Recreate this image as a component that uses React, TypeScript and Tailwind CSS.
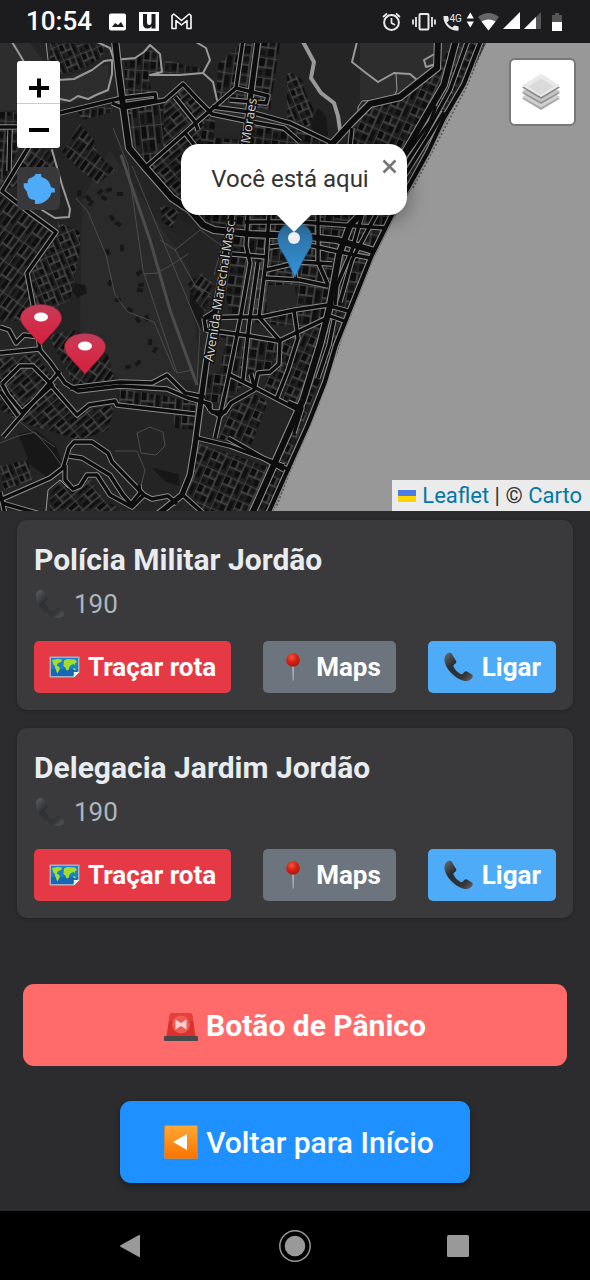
import React from "react";

type Pt = [number, number];

const path = (pts: Pt[]) => "M" + pts.map((p) => p.join(" ")).join("L");

const arteries: { w: number; pts: Pt[] }[] = [
  { w: 6, pts: [[115, 40], [119, 75], [123, 105], [129, 148], [144, 166], [172, 198], [190, 210], [203, 225], [214, 230], [250, 234], [300, 236], [337, 240], [374, 251]] },
  { w: 5, pts: [[258, 40], [250, 100], [243, 160], [232, 215], [222, 275], [208, 350], [201, 400], [195, 445], [190, 475], [182, 495], [158, 514]] },
  { w: 6, pts: [[456, 40], [444, 85], [412, 140], [380, 195], [350, 225], [339, 255], [329, 310], [320, 345], [303, 400], [285, 440], [252, 514]] },
  { w: 6, pts: [[438, 40], [437, 68], [400, 97], [370, 104], [352, 122], [330, 146]] },
  { w: 4, pts: [[482, 38], [464, 84], [444, 118], [428, 152], [408, 188], [392, 215], [372, 255], [352, 305], [336, 345], [325, 382], [308, 425], [290, 465], [268, 514]] },
];

const streets: Pt[][] = [
  [[0, 127], [20, 127], [60, 113], [105, 102], [122, 98], [155, 94], [156, 100], [122, 105]],
  [[112, 103], [124, 108], [165, 100], [183, 84], [197, 99], [212, 114], [246, 121], [284, 128], [300, 142]],
  [[243, 40], [236, 88], [197, 122], [146, 167]],
  [[175, 97], [195, 122], [198, 130]],
  [[236, 88], [268, 96], [266, 103], [230, 100]],
  [[212, 107], [250, 112], [290, 123], [334, 144]],
  [[185, 133], [200, 152]],
  [[10, 130], [9, 171]],
  [[30, 145], [2, 191], [30, 213], [56, 232], [27, 273], [36, 320], [40, 350]],
  [[0, 353], [39, 349], [50, 362], [65, 383], [78, 391], [120, 386], [167, 389], [188, 398], [210, 404], [210, 411]],
  [[70, 388], [120, 382], [152, 383], [167, 375], [185, 393], [205, 397]],
  [[0, 327], [9, 330], [16, 343], [24, 335], [40, 337]],
  [[60, 371], [3, 437]],
  [[2, 384], [20, 366], [33, 366], [52, 385], [22, 412], [8, 395], [2, 384]],
  [[0, 391], [18, 416]],
  [[49, 383], [77, 415], [89, 405], [115, 401], [117, 405], [160, 410], [195, 414]],
  [[0, 500], [50, 478], [63, 468], [69, 448], [74, 442], [92, 442], [108, 453], [112, 462], [144, 495], [152, 499], [168, 496], [177, 504]],
  [[0, 492], [5, 514]],
  [[2, 503], [40, 514]],
  [[69, 456], [82, 458], [110, 475], [123, 495], [131, 504], [140, 493], [139, 485]],
  [[65, 465], [65, 480], [73, 489], [80, 486], [87, 475], [97, 475], [110, 495], [132, 507], [145, 494]],
  [[205, 402], [212, 412], [225, 412], [231, 403], [254, 390], [258, 373], [270, 372], [279, 364], [280, 341], [259, 317], [266, 262], [269, 215]],
  [[212, 411], [220, 416], [227, 409]],
  [[248, 215], [246, 245], [250, 263], [240, 320], [229, 375], [215, 438]],
  [[258, 262], [249, 325], [243, 380]],
  [[204, 318], [235, 317], [262, 317], [295, 310], [328, 305]],
  [[206, 330], [250, 336], [279, 341], [325, 319]],
  [[294, 310], [298, 338], [288, 370], [277, 398]],
  [[228, 374], [252, 386], [298, 410]],
  [[251, 374], [255, 390]],
  [[204, 318], [206, 331]],
  [[204, 318], [214, 312]],
  [[228, 438], [284, 470]],
  [[197, 438], [230, 446], [284, 466]],
  [[184, 496], [204, 514]],
  [[232, 254], [268, 257]],
  [[266, 270], [300, 262], [332, 264]],
  [[265, 278], [300, 280], [328, 286]],
  [[270, 247], [300, 243], [335, 251], [370, 258]],
  [[245, 222], [300, 222], [385, 228]],
  [[318, 215], [318, 262], [328, 285]],
  [[294, 262], [296, 280]],
  [[362, 215], [352, 250], [337, 285], [335, 305]],
  [[376, 215], [352, 260], [340, 302]],
  [[468, 40], [450, 90], [425, 135], [402, 170], [376, 215]],
  [[436, 106], [430, 122], [402, 160]],
  [[444, 112], [430, 135], [402, 180]],
  [[350, 146], [352, 128]],
  [[330, 306], [348, 311]],
  [[330, 316], [344, 321]],
  [[334, 320], [329, 345], [318, 378]],
  [[288, 402], [302, 408], [294, 433]],
  [[278, 465], [290, 470]],
];

const rivers: { w: number; pts: Pt[] }[] = [
  { w: 2, pts: [[12, 42], [20, 55], [24, 62]] },
  { w: 1, pts: [[46, 42], [48, 60]] },
  { w: 2, pts: [[58, 80], [74, 79], [92, 70], [104, 61], [112, 60], [112, 74], [108, 90], [96, 95], [88, 99], [78, 96], [70, 101], [60, 99]] },
  { w: 2, pts: [[97, 42], [110, 48], [114, 60], [135, 58], [144, 52], [150, 45], [160, 54], [162, 72], [150, 75], [180, 75], [203, 73], [210, 60], [206, 48], [196, 42]] },
  { w: 2, pts: [[203, 73], [213, 82], [217, 100]] },
  { w: 4, pts: [[302, 40], [314, 62], [311, 78], [321, 93], [334, 103], [338, 116], [340, 130]] },
  { w: 2, pts: [[357, 42], [352, 62], [366, 73], [378, 82], [394, 73], [410, 74], [417, 80]] },
  { w: 1, pts: [[396, 74], [397, 90], [393, 99], [362, 101], [358, 107], [358, 112], [352, 120]] },
  { w: 2, pts: [[438, 52], [424, 60], [426, 67], [436, 64]] },
  { w: 2, pts: [[52, 150], [62, 185], [70, 209], [69, 217], [55, 218], [42, 210]] },
  { w: 1, pts: [[46, 511], [48, 490], [60, 480], [68, 488]] },
];

const taxiways: { w: number; pts: Pt[] }[] = [
  { w: 3, pts: [[121, 155], [150, 240], [170, 310], [197, 385]] },
  { w: 1, pts: [[113, 128], [128, 165], [143, 270], [177, 373], [193, 370]] },
  { w: 1, pts: [[132, 166], [200, 330], [197, 383]] },
  { w: 1, pts: [[76, 198], [88, 212], [106, 255], [115, 295], [128, 312], [154, 322], [175, 372]] },
  { w: 1, pts: [[143, 274], [157, 273], [173, 264], [188, 254]] },
  { w: 1, pts: [[137, 433], [150, 427], [163, 432], [165, 446], [156, 455], [141, 453], [137, 433]] },
  { w: 1, pts: [[115, 451], [137, 451], [145, 470], [141, 486]] },
  { w: 1, pts: [[0, 443], [18, 436], [35, 432], [52, 452], [62, 466]] },
  { w: 1, pts: [[12, 416], [30, 430], [55, 447]] },
  { w: 1, pts: [[160, 240], [175, 250], [195, 285], [212, 295]] },
  { w: 1, pts: [[175, 250], [200, 230], [222, 246], [214, 275]] },
];

const districts: { fill: string; pts: Pt[] }[] = [
  { fill: "url(#g-20)", pts: [[50, 43], [104, 45], [103, 56], [85, 68], [62, 74], [50, 60]] },
  { fill: "url(#g5)", pts: [[125, 62], [150, 48], [160, 58], [160, 72], [148, 76], [152, 92], [125, 96]] },
  { fill: "url(#g5)", pts: [[165, 60], [203, 69], [203, 74], [163, 73]] },
  { fill: "url(#g-6)", pts: [[128, 110], [163, 104], [164, 145], [147, 163], [135, 148]] },
  { fill: "url(#g50)", pts: [[164, 103], [184, 86], [211, 115], [200, 150], [178, 200], [148, 168], [164, 145]] },
  { fill: "url(#g35)", pts: [[62, 152], [80, 124], [94, 140], [97, 153], [115, 170], [98, 184], [78, 168]] },
  { fill: "url(#g5)", pts: [[78, 112], [110, 105], [112, 112], [82, 120]] },
  { fill: "url(#g5)", pts: [[0, 112], [18, 112], [18, 150], [5, 182], [0, 185]] },
  { fill: "url(#g35)", pts: [[30, 148], [50, 150], [60, 168], [20, 185], [8, 188]] },
  { fill: "url(#g35)", pts: [[0, 195], [54, 232], [25, 275], [34, 320], [0, 322]] },
  { fill: "url(#g-20)", pts: [[58, 222], [80, 232], [80, 250], [70, 300], [38, 315], [30, 275], [58, 232]] },
  { fill: "url(#g8)", pts: [[218, 64], [240, 43], [280, 43], [270, 110], [245, 106], [216, 100]] },
  { fill: "url(#g8)", pts: [[206, 117], [300, 130], [335, 145], [240, 175], [225, 232], [185, 205]] },
  { fill: "url(#g-20)", pts: [[287, 70], [303, 80], [305, 92], [314, 110], [310, 128], [287, 118]] },
  { fill: "url(#g25)", pts: [[366, 105], [400, 100], [436, 70], [430, 108], [402, 150], [350, 146]] },
  { fill: "url(#g25)", pts: [[452, 43], [480, 43], [440, 118], [380, 230], [345, 235]] },
  { fill: "url(#g8)", pts: [[230, 215], [390, 215], [350, 305], [325, 330], [230, 320], [222, 265]] },
  { fill: "url(#g35)", pts: [[188, 284], [202, 272], [214, 285], [206, 312], [196, 302]] },
  { fill: "url(#g50)", pts: [[160, 205], [180, 210], [172, 228], [162, 222]] },
  { fill: "url(#g8)", pts: [[213, 330], [278, 342], [275, 368], [252, 372], [228, 405], [206, 400]] },
  { fill: "url(#g25)", pts: [[280, 342], [326, 322], [312, 370], [298, 408], [262, 390]] },
  { fill: "url(#g25)", pts: [[228, 412], [254, 394], [268, 402], [250, 448], [218, 438]] },
  { fill: "url(#g25)", pts: [[197, 442], [282, 472], [262, 511], [204, 511], [188, 492]] },
  { fill: "url(#g25)", pts: [[325, 330], [340, 330], [268, 511], [254, 511], [304, 400]] },
  { fill: "url(#g35)", pts: [[48, 335], [75, 330], [108, 355], [115, 380], [75, 386]] },
  { fill: "url(#g50)", pts: [[0, 358], [36, 354], [75, 412], [115, 405], [108, 430], [80, 440], [30, 425], [0, 410]] },
  { fill: "url(#g5)", pts: [[118, 388], [197, 402], [196, 430], [175, 428], [172, 412], [118, 403]] },
  { fill: "url(#g-20)", pts: [[0, 466], [28, 460], [32, 480], [4, 490]] },
  { fill: "url(#g50)", pts: [[50, 495], [62, 478], [72, 490], [90, 478], [104, 500], [125, 511], [50, 511]] },
];

const clearings: Pt[][] = [
  [[268, 285], [295, 285], [297, 306], [266, 312]],
  [[214, 336], [226, 338], [220, 372], [209, 374]],
  [[237, 110], [247, 112], [243, 140], [214, 138], [215, 118]],
];

const trees: Pt[] = [[79, 193], [91, 203], [100, 192], [109, 190], [120, 194], [104, 198], [88, 198], [108, 252], [122, 248], [110, 283], [139, 273], [141, 285], [118, 300], [130, 310], [138, 320], [147, 318], [150, 342], [155, 350], [138, 363], [128, 367], [140, 290], [118, 224], [112, 218]];

function Grid({ id, w, h, angle }: { id: string; w: number; h: number; angle: number }) {
  return (
    <pattern id={id} width={w * 3} height={h * 2} patternUnits="userSpaceOnUse" patternTransform={`rotate(${angle})`}>
      <rect width={w * 3} height={h * 2} fill="#202020" />
      <rect x="1" y="1" width={w - 2} height={h - 2} fill="#0d0d0d" />
      <rect x={w + 1} y={h + 1} width={w - 2} height={h - 3} fill="#0f0f0f" />
      <rect x={w + 2} y="2" width={w - 2} height={h - 5} fill="#151515" />
      <rect x={w * 2 + 1} y="3" width={w - 3} height={h + 2} fill="#101010" />
      <rect x="1" y={h + 3} width={w - 3} height={h - 5} fill="#141414" />
      <path d={`M0 0H${w * 3}M0 ${h}H${w * 2}M0 0V${h * 2}M${w} 0V${h}M${w * 2} 0V${h * 2}`} stroke="#575757" strokeWidth="1" fill="none" />
    </pattern>
  );
}

function StreetMap() {
  return (
    <svg className="block h-full w-full" viewBox="0 43 590 468" preserveAspectRatio="xMidYMid slice" aria-hidden="true">
      <defs>
        <Grid id="g-20" w={6} h={8} angle={-22} />
        <Grid id="g-6" w={7} h={14} angle={-6} />
        <Grid id="g5" w={7} h={10} angle={4} />
        <Grid id="g8" w={8} h={10} angle={8} />
        <Grid id="g25" w={7} h={9} angle={24} />
        <Grid id="g35" w={6} h={13} angle={36} />
        <Grid id="g50" w={6} h={11} angle={50} />
      </defs>
      <rect y="43" width="590" height="468" fill="#242424" />
      <path d="M0 43H30L58 80L108 64L110 92L62 104L0 112Z M360 43H436V66L398 96L360 100Z" fill="#2d2d2d" />
      <path d="M110 150L190 270L200 380L120 380L80 330L82 200Z" fill="#2a2a2a" />
      <g fill="#171717">
        <path d="M318 108l8 8 2 20-12 4-6-16zM190 285l14 20-2 25-12-25zM36 430l20 16 8 22-14 12-20-16-12-30zM75 283l10 2 2 8-10 5-5-8zM152 468l26 6 2 12-14-4z" />
        {trees.map(([x, y], i) => (
          <rect key={i} x={x - 2} y={y - 3} width="4" height="6" transform={`rotate(${i * 23} ${x} ${y})`} />
        ))}
      </g>
      {districts.map((d, i) => (
        <path key={i} d={path(d.pts) + "Z"} fill={d.fill} />
      ))}
      {clearings.map((c, i) => (
        <path key={i} d={path(c) + "Z"} fill="#272727" />
      ))}
      <g fill="none" stroke="#4c4c4c" strokeLinejoin="round">
        {taxiways.map((t, i) => (
          <path key={i} d={path(t.pts)} strokeWidth={t.w} />
        ))}
      </g>
      <g fill="none" stroke="#999999" strokeLinejoin="round" strokeLinecap="round">
        {rivers.map((r, i) => (
          <path key={i} d={path(r.pts)} strokeWidth={r.w} />
        ))}
      </g>
      <path d="M486 43L464 88L447 119L430 154L410 191L394 218L374 258L354 308L338 348L327 384L310 427L292 467L273 511H590V43Z" fill="#989898" />
      <path d="M485 43L466 88L449 120L412 190M341 340L336 356M319 404L304 440L289 474L276 508" fill="none" stroke="#555" strokeWidth="1.6" strokeDasharray="2 2" />
      <g fill="none" stroke="#8c8c8c" strokeLinejoin="round">
        {streets.map((s, i) => (
          <path key={i} d={path(s)} strokeWidth="5.4" />
        ))}
        {arteries.map((s, i) => (
          <path key={i} d={path(s.pts)} strokeWidth={s.w + 2.2} />
        ))}
      </g>
      <g fill="none" stroke="#0d0d0d" strokeLinejoin="round">
        {streets.map((s, i) => (
          <path key={i} d={path(s)} strokeWidth="3.4" />
        ))}
        {arteries.map((s, i) => (
          <path key={i} d={path(s.pts)} strokeWidth={s.w} />
        ))}
      </g>
      <g fill="#d2d2d2" stroke="#141414" strokeWidth="3" paintOrder="stroke" fontFamily="'Open Sans', 'Noto Sans', sans-serif" fontSize="13">
        <text transform="translate(213 362) rotate(-81)">Avenida Marechal Masc</text>
        <text transform="translate(248 155) rotate(-81)">o Moraes</text>
      </g>
    </svg>
  );
}

function StatusBar() {
  return (
    <header className="flex h-[43px] shrink-0 items-center justify-between bg-[#1c1c1f] pr-6 pl-[26px] text-white">
      <div className="flex items-center">
        <span className="text-[26px] leading-[43px] font-medium">10:54</span>
        <svg className="ml-4 h-[22px] w-[84px] shrink-0" viewBox="108 11 84 22" aria-hidden="true">
          <rect x="109" y="13.500" width="17" height="17" rx="2" fill="#fff" />
          <path d="M112 27l3-4 3 2 3-3 3 5z" fill="#1c1c1f" />
          <rect x="139" y="12" width="20" height="19" fill="#fff" />
          <path d="M143 14v9.500q0 5 4.500 5 3 0 4-2.500v2.500h4v-14.500h-4v8q0 3-2.300 3t-2.200-3v-8z" fill="#1c1c1f" />
          <path d="M172 28.500v-13l1.800-1.500 7.700 6.500 7.700-6.500 1.800 1.500v13h-4v-8l-5.500 4.500-5.500-4.500v8z" fill="none" stroke="#fff" strokeWidth="1.600" strokeLinejoin="round" />
        </svg>
      </div>
      <svg className="h-[22px] w-[184px] shrink-0" viewBox="382 11 184 22" aria-hidden="true">
        <g fill="none" stroke="#e8e8e8" strokeWidth="2">
          <circle cx="391.500" cy="22.500" r="7.400" />
          <path d="M391.500 18v5l3.500 2M383 17l4-3.500M400 17l-4-3.500" strokeWidth="1.700" />
          <rect x="419.500" y="14" width="9" height="15.500" rx="1" />
          <path d="M416 17v10M413 19.500v5M432 17v10M435 19.500v5" strokeWidth="1.800" />
        </g>
        <path d="M444.200 16h3.300q.7 0 .8.700l.5 3.300q.1.500-.3.900l-1.600 1.700q1.900 3.400 5.200 5l1.700-1.700q.4-.4.900-.3l3.200.6q.7.100.7.800v3q0 .8-.8.800c-8 0-14.300-6-14.400-14 0-.5.300-.8.800-.8z" fill="#e8e8e8" />
        <text x="449.500" y="21.500" fontSize="10" fill="#e8e8e8" fontFamily="Roboto, sans-serif">4G</text>
        <path d="M470.300 12.500l3.600 6h-7.200zM470.300 27.500l3.600-6h-7.200z" fill="#fff" />
        <path d="M478 17q10.500-8 21 0L488.500 30.500z" fill="#666" />
        <path d="M481.500 21.500q7-4 14 0l-7 9z" fill="#fff" />
        <path d="M520 12v17h-17z" fill="#fff" />
        <path d="M541 12v17h-17z" fill="#555" />
        <path d="M536 17v12h-12z" fill="#fff" />
        <path d="M555 13h4v2h3v16h-10v-16h3z" fill="#555" />
        <rect x="552" y="22" width="10" height="9" fill="#fff" />
      </svg>
    </header>
  );
}

function Pin({ className, id }: { className: string; id: string }) {
  return (
    <svg className={className} viewBox="0 0 42 42" aria-hidden="true">
      <defs>
        <linearGradient id={id} x1="0" y1="0" x2="0" y2="1">
          <stop offset="0" stopColor="#b8405a" />
          <stop offset=".3" stopColor="#d0324f" />
          <stop offset="1" stopColor="#d51f3c" />
        </linearGradient>
      </defs>
      <path d="M21 .5C9 .5.500 6.500.500 14c0 5 4.500 9.500 9 14.500L21 41 32.500 28.500c4.500-5 9-9.500 9-14.500C41.500 6.500 33 .5 21 .5z" fill={`url(#${id})`} stroke="#a81c38" strokeOpacity=".5" />
      <ellipse cx="21" cy="13" rx="7" ry="4.500" fill="#fff" />
    </svg>
  );
}

function MapPanel() {
  const zoomBtn = "flex items-center justify-center";
  return (
    <section className="relative h-[468px] w-full shrink-0 overflow-hidden" aria-label="Mapa">
      <StreetMap />

      <div className="absolute top-[18px] left-[17px] flex w-[43px] flex-col overflow-hidden rounded-[3px] bg-white">
        <button type="button" aria-label="Aumentar zoom" className={zoomBtn + " h-[43px] border-b border-[#cccccc]"}>
          <svg className="mt-3 h-5 w-5" viewBox="0 0 20 20"><path d="M10 .5v19M0 10h20" stroke="#000" strokeWidth="4" /></svg>
        </button>
        <button type="button" aria-label="Diminuir zoom" className={zoomBtn + " h-11"}>
          <svg className="mt-2 h-5 w-5" viewBox="0 0 20 20"><path d="M0 10h20" stroke="#000" strokeWidth="4" /></svg>
        </button>
      </div>

      <button type="button" aria-label="Minha localização" className="absolute top-[124px] left-[17px] flex h-[43px] w-[43px] items-center justify-center rounded-md bg-[#3a3a3c]/95">
        <svg className="h-8 w-8" viewBox="0 0 32 32">
          <path d="M12.500 1h5.500l.7 3.200c2.300.5 4.500 1.600 6 3.300 1.800 2 2.800 4.400 3.300 6.800l3.800 1.200v4h-3.500c-.4 2.300-1.300 4.300-2.600 5.800-1.600 1.900-3.600 3.500-6 4.400-2.400 1-4.800 1.300-7.700 1.300v-4c-2.200 0-4.200-.7-5.700-1.700-1.400-2-2.200-4.200-2.300-6.600L1.500 15.500.7 13.700v-3.400h4c-.4-1.800.3-3.600 1.600-5 1.500-.3 3-1 5-2.300z" fill="#4dabf7" />
        </svg>
      </button>

      <button type="button" aria-label="Camadas" className="absolute top-[15px] right-[14px] flex h-[68px] w-[67px] items-center justify-center rounded-[6px] border-2 border-[#777777] bg-white pr-1">
        <svg className="h-[38px] w-[40px]" viewBox="0 0 40 38">
          <path d="M1 25.500L20 15l19 10.500L20 37z" fill="#a6a6a6" />
          <path d="M1 23.800L20 13l19 10.800L20 34.500z" fill="#d0d0d0" />
          <path d="M1 20L20 9l19 11L20 31z" fill="#929292" />
          <path d="M1 18.500L20 8l19 10.500L20 29z" fill="#c4c4c4" />
          <path d="M1 14.500L20 4l19 10.500L20 26z" fill="#898989" />
          <path d="M1 12.800L20 .5l19 12.300L20 24z" fill="#e9e9e9" />
          <path d="M7 13.500L20 5.500l13 8L20 22z" fill="#dadada" />
        </svg>
      </button>

      <Pin id="pin-a" className="absolute top-[261px] left-[20px] h-[42px] w-[42px]" />
      <Pin id="pin-b" className="absolute top-[290px] left-[64px] h-[42px] w-[42px]" />
      <svg className="absolute top-[179px] left-[277px] h-[56px] w-[36px]" viewBox="0 0 36 56" aria-hidden="true">
        <defs>
          <linearGradient id="bluePin" x1="0" y1="0" x2="0" y2="1">
            <stop offset="0" stopColor="#2e6c97" />
            <stop offset="1" stopColor="#3393de" />
          </linearGradient>
        </defs>
        <path d="M18 1C8 1 1 8 1 17c0 8 5 13 9 21l8 17 8-17c4-8 9-13 9-21C35 8 28 1 18 1z" fill="url(#bluePin)" stroke="#2474ab" />
      </svg>

      <div className="absolute top-[101px] left-[181px] flex h-[71px] w-[226px] items-center justify-center rounded-[18px] bg-white shadow-[0_4px_20px_rgba(0,0,0,0.4)]">
        <p className="pr-2 pb-0.5 text-[24px] whitespace-nowrap text-[#333333]">Você está aqui</p>
        <button type="button" aria-label="Fechar" className="absolute top-[15px] right-[10px] h-[15px] w-[15px]">
          <svg viewBox="0 0 15 15"><path d="M1.500 1.500l12 12M13.500 1.500l-12 12" stroke="#757575" strokeWidth="2.600" /></svg>
        </button>
        <svg className="absolute top-[70px] left-[95px] h-[32px] w-[36px]" viewBox="0 0 36 32" aria-hidden="true">
          <path d="M0 0h36L18 18z" fill="#fff" />
          <circle cx="18" cy="24" r="6" fill="#eeeeee" />
        </svg>
      </div>

      <div className="absolute right-0 bottom-0 flex h-[31px] items-center bg-[#ebebeb] pr-2 pl-[6px] text-[22px] whitespace-pre text-[#333333]">
        <svg className="mr-[6px] h-3 w-[18px]" viewBox="0 0 18 12" aria-hidden="true"><path d="M0 0h18v6H0z" fill="#4c7be1" /><path d="M0 6h18v6H0z" fill="#ffd500" /></svg>
        <a href="#leaflet" className="text-[#0078a8]">Leaflet</a>
        <span> | © </span>
        <a href="#carto" className="text-[#0078a8]">Carto</a>
      </div>
    </section>
  );
}

function PhoneIcon({ className }: { className: string }) {
  return (
    <svg className={className} viewBox="0 0 30 30" aria-hidden="true">
      <defs>
        <linearGradient id="handset" x1="0" y1="0" x2="1" y2="1">
          <stop offset="0" stopColor="#6b6f72" />
          <stop offset=".35" stopColor="#2b2d2f" />
          <stop offset=".75" stopColor="#323436" />
          <stop offset="1" stopColor="#66696c" />
        </linearGradient>
      </defs>
      <path d="M5.500.8C3 1.500.8 4 .9 7.500c.2 4.500 3 9.600 7 13.700 4.500 4.600 10.600 8 15.600 7.800 2.800-.1 5-2.200 5.700-4.200.4-1.200-.2-2-1.200-2.600l-4.600-2.600c-1-.5-2-.3-2.700.5l-1.200 1.400c-.6.8-1.400 1-2.400.5-3-1.500-5.600-4.300-7-7.200-.4-1-.1-1.700.6-2.300l1.200-1c.9-.7 1.100-1.600.7-2.600L8.400 2C7.900.9 6.900.4 5.500.8z" fill="url(#handset)" />
    </svg>
  );
}

function MapIcon() {
  return (
    <svg className="h-[22px] w-[31px]" viewBox="0 0 30 22" preserveAspectRatio="none" aria-hidden="true">
      <path d="M.5.5h29v15.500L24 21.500H.5z" fill="#9fb4c2" />
      <path d="M2 2h26v12.500L23 20H2z" fill="#1b7fd0" />
      <path d="M2 13h26v2l-5 5H2z" fill="#1667b8" />
      <path d="M3 4l5-1 5 .5-1.500 2.500-3 1.500-1 2 2.500 1.500.5 2.500-2.500 4-1.500-4-1-3.500L4 8zM14.500 4.500l3-1.500 8 .5 1.500 2.500-2 1.500.5 2-2-1.500-2 1-1.500 1.500-1 3.500-2 .5-1-3-2-1.500zM23 12l2.500.5.5 2-2-.5z" fill="#a4dc2c" />
      <path d="M29.500 16H24v5.500z" fill="#eef4f7" />
    </svg>
  );
}

function PushpinIcon() {
  return (
    <svg className="h-[30px] w-[30px]" viewBox="0 0 30 30" aria-hidden="true">
      <defs>
        <radialGradient id="pinHead" cx=".4" cy=".3" r=".7">
          <stop offset="0" stopColor="#f5564a" />
          <stop offset=".5" stopColor="#dc2114" />
          <stop offset="1" stopColor="#ae170d" />
        </radialGradient>
      </defs>
      <path d="M14.300 14h1.600l-.3 14.500h-.9z" fill="#b4bcc3" />
      <circle cx="15" cy="8" r="6.800" fill="url(#pinHead)" />
    </svg>
  );
}

function SirenIcon() {
  return (
    <svg className="mt-1 h-[28px] w-[34px]" viewBox="0 0 34 28" aria-hidden="true">
      <path d="M9 0h16q3 0 3.500 3L31.500 23h-29L5.500 3Q6 0 9 0z" fill="#d9322d" />
      <path d="M9 0h16q3 0 3.500 3l.8 5h-24.600l.8-5Q6 0 9 0z" fill="#e5403a" />
      <circle cx="17" cy="11.500" r="9" fill="#ee5a54" />
      <path d="M11.500 6.500l5.500 3.500 5.500-3.500v10L17 13l-5.500 3.500z" fill="#f8cfd0" />
      <rect y="23" width="34" height="5" rx="1" fill="#484848" />
    </svg>
  );
}

function BackEmoji() {
  return (
    <svg className="h-[34px] w-[34px]" viewBox="0 0 34 34" aria-hidden="true">
      <defs>
        <linearGradient id="tile" x1="0" y1="0" x2="0" y2="1">
          <stop offset="0" stopColor="#ffa834" />
          <stop offset="1" stopColor="#fb7200" />
        </linearGradient>
      </defs>
      <rect x=".5" y=".5" width="33" height="33" rx="1.500" fill="url(#tile)" stroke="#c88a4a" />
      <path d="M23 9v16L9 17z" fill="#fff" />
    </svg>
  );
}

function StationCard({ name, phone }: { name: string; phone: string }) {
  const btn = "flex h-[52px] items-center gap-2 rounded-[5px] px-[15px] text-[26px] font-bold whitespace-nowrap text-white";
  return (
    <article className="rounded-[10px] bg-[#3a3a3c] p-[17px] shadow-[0_1px_3px_rgba(0,0,0,0.25)]">
      <h2 className="text-[30px] leading-[46px] font-bold text-[#e9ecef]">{name}</h2>
      <p className="flex items-center gap-2 text-[26px] leading-[42px] text-[#adb5bd]">
        <PhoneIcon className="h-[30px] w-[32px] opacity-75" />
        {phone}
      </p>
      <div className="mt-4 flex flex-wrap justify-between gap-y-2">
        <button type="button" className={btn + " bg-[#e63946]"}>
          <MapIcon />
          Traçar rota
        </button>
        <button type="button" className={btn + " bg-[#6c757d]"}>
          <PushpinIcon />
          Maps
        </button>
        <a href={"tel:" + phone} className={btn + " bg-[#4dabf7]"}>
          <PhoneIcon className="h-[30px] w-[31px]" />
          Ligar
        </a>
      </div>
    </article>
  );
}

export default function App() {
  return (
    <div className="flex min-h-screen w-full flex-col bg-[#2c2c2e] font-['Roboto',sans-serif]">
      <StatusBar />
      <main className="flex flex-1 flex-col">
        <MapPanel />
        <div className="flex flex-col gap-[18px] px-[17px] pt-[9px]">
          <StationCard name="Polícia Militar Jordão" phone="190" />
          <StationCard name="Delegacia Jardim Jordão" phone="190" />
        </div>
        <div className="flex flex-col items-center gap-[35px] px-[23px] pt-[66px] pb-7">
          <button type="button" className="flex h-[82px] w-full items-center justify-center gap-2 rounded-[11px] bg-[#ff6b6b] text-[30px] font-bold text-white">
            <SirenIcon />
            Botão de Pânico
          </button>
          <a href="#inicio" className="flex h-[82px] items-center justify-center gap-2 rounded-[11px] bg-[#1e90ff] pr-[36px] pl-[44px] text-[30px] font-medium whitespace-nowrap text-white shadow-[0_3px_6px_rgba(0,0,0,0.3)]">
            <BackEmoji />
            Voltar para Início
          </a>
        </div>
      </main>
      <nav className="flex h-[69px] shrink-0 items-center justify-around bg-black px-12" aria-label="Sistema">
        <button type="button" aria-label="Voltar">
          <svg className="h-8 w-8" viewBox="0 0 32 32"><path d="M26 5.500v21q0 1-1 .5L6.500 16.800q-1-.8 0-1.600L25 5q1-.5 1 .5z" fill="#999" /></svg>
        </button>
        <button type="button" aria-label="Início">
          <svg className="h-8 w-8" viewBox="0 0 32 32"><circle cx="16" cy="16" r="15.200" fill="none" stroke="#999" strokeWidth="1.500" /><circle cx="16" cy="16" r="10.300" fill="#999" /></svg>
        </button>
        <button type="button" aria-label="Recentes">
          <svg className="h-8 w-8" viewBox="0 0 32 32"><rect x="3" y="5" width="22" height="22" rx="1.500" fill="#999" /></svg>
        </button>
      </nav>
    </div>
  );
}
